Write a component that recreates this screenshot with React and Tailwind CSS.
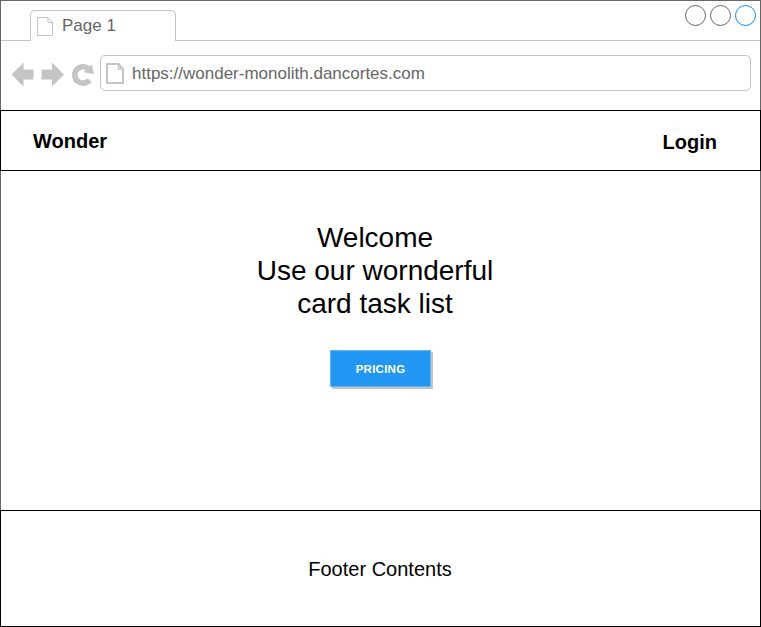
function TabFileIcon() {
  return (
    <svg className="shrink-0" width="17" height="20" viewBox="0 0 17 20" fill="none" stroke="#c4c4c4">
      <path d="M0.5 0.5H11L15.5 5.5V18.5H0.5Z" />
      <path d="M11 0.5V5.5H15.5" />
    </svg>
  );
}

function AddressFileIcon() {
  return (
    <svg className="shrink-0" width="19" height="22" viewBox="0 0 19 22" fill="none" stroke="#c4c4c4">
      <path d="M1 1H12.5L17 6V20H1Z" strokeWidth="2" />
      <path d="M12.5 1V6H17" strokeWidth="1.3" />
    </svg>
  );
}

function NavIcons() {
  return (
    <svg className="shrink-0" width="84" height="26" viewBox="0 0 84 26" fill="#c4c4c4">
      <path d="M0.5 13.5L12.5 1.5V8.5H22.5V18.5H12.5V25.5Z" />
      <path d="M53 13.5L41 1.5V8.5H30.5V18.5H41V25.5Z" />
      <path d="M78.5 19A8.2 8.2 0 1 1 78.1 8.5" fill="none" stroke="#c4c4c4" strokeWidth="5.6" />
      <path d="M80.8 3.2L82.8 13L72.5 11.3Z" />
    </svg>
  );
}

function BrowserChrome() {
  return (
    <div className="h-[110px] border-x border-t border-[#666] text-[17px] text-[#666]">
      <div className="flex h-10">
        <div className="w-[29px] border-b border-[#c4c4c4]" />
        <div className="mt-[9px] flex w-[146px] rounded-t-[5px] border-x border-t border-[#c4c4c4] pt-[6px] pl-[6px]">
          <TabFileIcon />
          <span className="ml-2 leading-[18px]">Page 1</span>
        </div>
        <div className="flex flex-1 justify-end gap-1 border-b border-[#c4c4c4] pt-1 pr-1">
          <span className="size-[21px] rounded-full border border-[#666]" />
          <span className="size-[21px] rounded-full border border-[#666]" />
          <span className="size-[21px] rounded-full border border-[#008cff]" />
        </div>
      </div>
      <div className="flex pt-[14px] pl-[10px]">
        <div className="pt-[6px]">
          <NavIcons />
        </div>
        <div className="ml-[5px] flex h-9 w-[651px] items-center rounded-[5px] border border-[#c4c4c4] pt-[2px] pl-[5px]">
          <AddressFileIcon />
          <span className="ml-[7px]">https://wonder-monolith.dancortes.com</span>
        </div>
      </div>
    </div>
  );
}

export default function App() {
  return (
    <div className="flex h-[627px] w-[761px] flex-col overflow-hidden bg-white font-['Liberation_Sans',Arial,sans-serif] text-black">
      <BrowserChrome />
      <header className="flex h-[61px] justify-between border border-black pr-[43px] pl-8 text-[20px] leading-6 font-bold">
        <span className="pt-[18px]">Wonder</span>
        <span className="pt-[19px]">Login</span>
      </header>
      <main className="flex h-[339px] flex-col items-center border-x border-[#666] pt-[50px]">
        <h1 className="mr-[11px] text-center text-[28px] leading-[33px]">
          Welcome
          <br />
          Use our wornderful
          <br />
          card task list
        </h1>
        <button className="mt-[30px] h-[37px] w-[101px] border border-[#64b5f6] bg-[#2196f3] pt-[2px] text-[11.5px] font-bold tracking-[0.25px] text-white shadow-[2px_2px_0_#c0c4c8]">
          PRICING
        </button>
      </main>
      <footer className="flex h-[117px] items-center justify-center border border-black pr-px text-[20px]">
        Footer Contents
      </footer>
    </div>
  );
}
